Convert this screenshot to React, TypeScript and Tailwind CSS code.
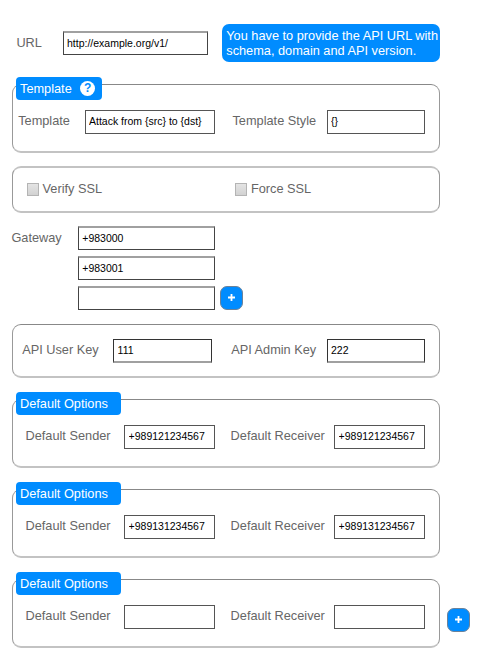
import React from "react";

const label = "block shrink-0 whitespace-nowrap text-[12.75px] leading-[15px] text-[#666]";
const field =
  "block h-6 shrink-0 rounded-none border bg-white pr-0 pt-0 pb-[2px] text-[10.5px] leading-[14px] text-black outline-none";
const plain = "border-[#555]";
const lightTop = "border-t-2 border-[#444] border-t-[#a0a0a0]";
const lightBottom = "border-b-2 border-[#333] border-b-[#a0a0a0]";
const panel =
  "w-[428px] shrink-0 rounded-[9px] border border-b-2 border-[#888] border-b-[#c3c3c3] border-l-[#999] border-r-[#999]";

function Legend({ children, width }: { children: React.ReactNode; width: string }) {
  return (
    <div
      className={`-mt-2 ml-[3px] flex h-[22.5px] items-center rounded-[4px] bg-[#008cff] pl-1 text-[12.75px] leading-[15px] text-white ${width}`}
    >
      {children}
    </div>
  );
}

function AddButton({ className = "" }: { className?: string }) {
  return (
    <button
      type="button"
      aria-label="Add"
      className={`flex h-[24px] w-[23.4px] shrink-0 items-start rounded-[7px] border border-[#6c8299] bg-[#008cff] pl-[6px] pt-[6px] ${className}`}
    >
      <svg width="9" height="9" viewBox="0 0 9 9">
        <path d="M4.5 1v7M1 4.5h7" stroke="#fff" strokeWidth="1.8" />
      </svg>
    </button>
  );
}

function Check({ text, className }: { text: string; className: string }) {
  return (
    <label className={`flex items-start ${className}`}>
      <span className="mt-[2px] h-[13px] w-3 shrink-0 border border-[#b4b4b4] bg-linear-to-b from-[#e4e4e4] to-[#d2d2d2]" />
      <span className={`${label} ml-[3.5px]`}>{text}</span>
    </label>
  );
}

function Options({ value, className = "" }: { value: string; className?: string }) {
  return (
    <section className={`h-[69px] ${panel} ${className}`}>
      <Legend width="w-[105px]">Default Options</Legend>
      <div className="mt-[10.5px] flex items-start">
        <span className={`${label} ml-[12.5px] mt-[3px] w-[98.5px]`}>Default Sender</span>
        <input className={`${field} ${plain} w-[91px] pl-[3.6px]`} defaultValue={value} />
        <span className={`${label} ml-[15.6px] mt-[3px] w-[103.4px]`}>Default Receiver</span>
        <input className={`${field} ${plain} w-[91px] pl-[3.6px]`} defaultValue={value} />
      </div>
    </section>
  );
}

export default function App() {
  return (
    <main className="flex h-[670px] w-[483px] flex-col overflow-hidden bg-white font-['Liberation_Sans',Arial,sans-serif]">
      <div className="mt-6 flex h-[38px] items-start pl-4">
        <span className={`${label} mt-[11px] ml-[0.4px] w-[46.6px]`}>URL</span>
        <input className={`${field} ${lightTop} mt-[7px] w-[145px] pl-[3px]`} defaultValue="http://example.org/v1/" />
        <p className="ml-[14px] h-[38px] w-[218px] whitespace-nowrap rounded-[7px] bg-[#008cff] pl-[4.3px] pt-1 text-[12.75px] leading-[15px] text-white">
          You have to provide the API URL with
          <br />
          schema, domain and API version.
        </p>
      </div>

      <section className={`ml-3 mt-[22px] h-[69px] ${panel}`}>
        <Legend width="w-[86px]">
          Template
          <span className="ml-[8.5px] flex h-[15px] w-[15px] items-center justify-center rounded-full bg-white text-[12px] font-bold leading-none text-[#008cff]">
            ?
          </span>
        </Legend>
        <div className="mt-[10.5px] flex items-start">
          <span className={`${label} ml-[5.2px] mt-[3px] w-[66.8px]`}>Template</span>
          <input className={`${field} ${plain} w-[130px] pl-[3px]`} defaultValue="Attack from {src} to {dst}" />
          <span className={`${label} ml-[17.5px] mt-[3px] w-[94.5px]`}>Template Style</span>
          <input className={`${field} ${plain} w-[98px] pl-[3px]`} defaultValue="{}" />
        </div>
      </section>

      <section className={`ml-3 mt-[13px] flex h-[47px] items-start border-t-2 border-t-[#c3c3c3] pt-[13px] ${panel}`}>
        <Check text="Verify SSL" className="ml-[14px] w-[208.4px]" />
        <Check text="Force SSL" className="" />
      </section>

      <div className="ml-[11px] mt-[13px] flex h-[84px] items-start">
        <span className={`${label} mt-[4px] ml-[0.4px] w-[66.6px]`}>Gateway</span>
        <div className="flex flex-col gap-[6px]">
          <input className={`${field} ${lightTop} w-[137px] pl-[3.3px]`} defaultValue="+983000" />
          <input className={`${field} ${lightTop} w-[137px] pl-[3.3px]`} defaultValue="+983001" />
          <input className={`${field} ${lightTop} w-[137px]`} />
        </div>
        <AddButton className="ml-[5px] self-end" />
      </div>

      <section className={`ml-3 mt-[14px] flex h-[54px] items-start pt-[14px] ${panel}`}>
        <span className={`${label} ml-[9.2px] mt-[3px] w-[90.8px]`}>API User Key</span>
        <input className={`${field} ${lightBottom} w-[99px] pl-[3.6px] pb-px`} defaultValue="111" />
        <span className={`${label} ml-[19.2px] mt-[3px] w-[95.8px]`}>API Admin Key</span>
        <input className={`${field} ${lightBottom} w-[98px] pl-[3px] pb-px`} defaultValue="222" />
      </section>

      <Options value="+989121234567" className="ml-3 mt-[21px]" />
      <Options value="+989131234567" className="ml-3 mt-[21px]" />
      <div className="ml-3 mt-[21px] flex items-start">
        <Options value="" />
        <AddButton className="ml-[7px] mt-[29px]" />
      </div>
    </main>
  );
}
